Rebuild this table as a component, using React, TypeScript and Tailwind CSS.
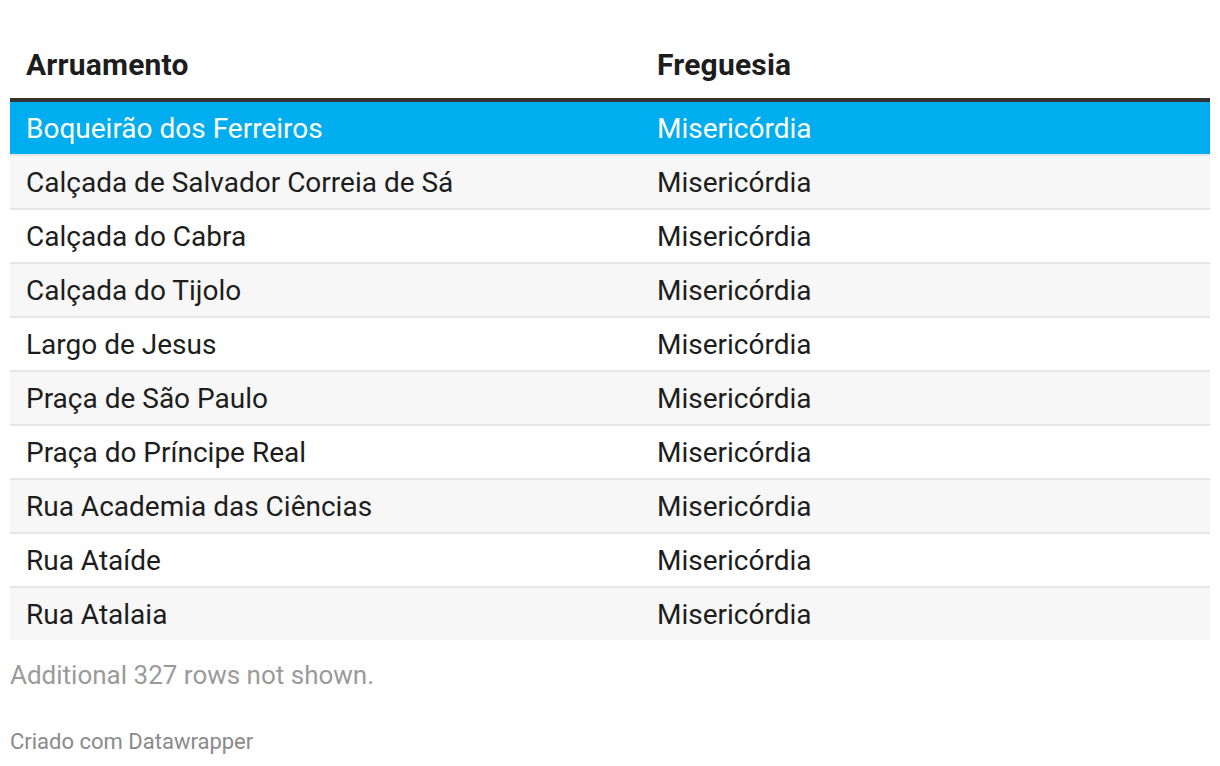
import React from "react";

const rows = [
  "Boqueirão dos Ferreiros",
  "Calçada de Salvador Correia de Sá",
  "Calçada do Cabra",
  "Calçada do Tijolo",
  "Largo de Jesus",
  "Praça de São Paulo",
  "Praça do Príncipe Real",
  "Rua Academia das Ciências",
  "Rua Ataíde",
  "Rua Atalaia",
];

export default function App() {
  return (
    <div
      className="w-[1220px] h-[766px] bg-white px-[10px] pt-[34px]"
      style={{ fontFamily: "Roboto, 'Noto Sans', sans-serif" }}
    >
      <div className="flex h-[68px] border-b-4 border-[#333333] text-[30px] font-bold text-[#1d1d1d] items-center pb-[4px] tracking-[0.2px]">
        <div className="w-[630px] pl-[16px]">Arruamento</div>
        <div className="flex-1 pl-[17px]">Freguesia</div>
      </div>
      {rows.map((r, i) => {
        const first = i === 0;
        const last = i === rows.length - 1;
        const bg = first ? "bg-[#00aeef] text-white" : i % 2 === 1 ? "bg-[#f7f7f7] text-[#1d1d1d]" : "bg-white text-[#1d1d1d]";
        return (
          <div
            key={r}
            className={`flex items-center text-[28px] pt-[1px] ${bg} ${last ? "h-[52px]" : "h-[54px] border-b-2 border-[#e6e6e6]"}`}
          >
            <div className="w-[630px] pl-[16px]">{r}</div>
            <div className="flex-1 pl-[17px]">Misericórdia</div>
          </div>
        );
      })}
      <div className="text-[26px] text-[#9a9a9a] mt-[20px] leading-[30px]">Additional 327 rows not shown.</div>
      <div className="text-[22px] text-[#8a8a8a] mt-[39px] leading-[26px]">Criado com Datawrapper</div>
    </div>
  );
}
